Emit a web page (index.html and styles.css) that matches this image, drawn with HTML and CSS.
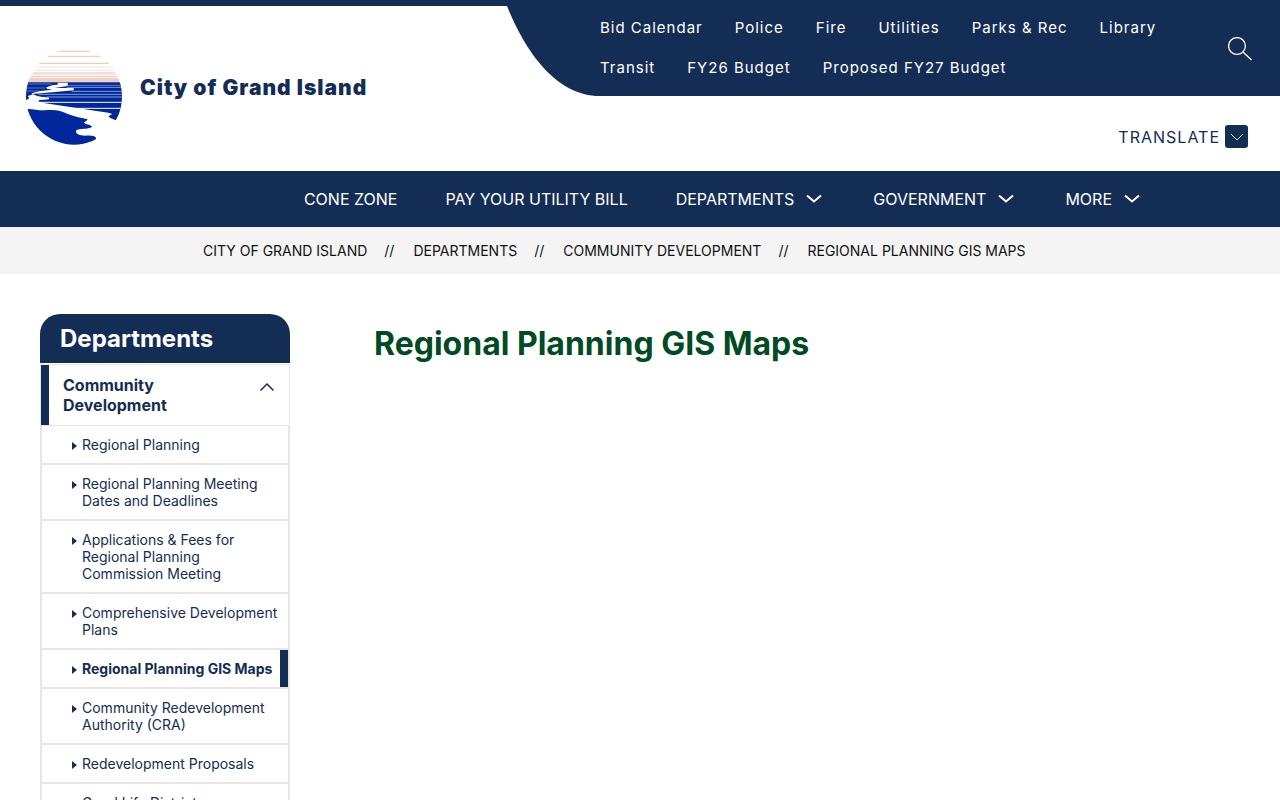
FILE: index.html
```html
<!DOCTYPE html>
<html lang="en">
<head>
<meta charset="utf-8">
<meta name="viewport" content="width=device-width, initial-scale=1">
<title>Regional Planning GIS Maps - City of Grand Island</title>
<link rel="stylesheet" href="styles.css">
</head>
<body>
<header class="site-header">
  <a class="brand" href="#">
    <svg class="brand-logo" viewBox="0 0 360 345" aria-hidden="true">
      <defs><clipPath id="disc"><circle cx="177" cy="170" r="144"/></clipPath></defs>
      <g clip-path="url(#disc)">
        <g fill="none" stroke-width="3">
          <path stroke="#eec0b2" d="M125 34H230M98 49H257M70 70H285M40 99H320M35 110H325"/>
          <path stroke="#ece6dc" d="M60 81H300M50 90H310M40 104H320"/>
          <path stroke="#f0bfb0" stroke-width="4" d="M30 117H325M30 123H325"/>
        </g>
        <path fill="#00279b" d="M30 127H325V242H306L286 234L280 229L292 222L280 218L200 206L86 189L68 184L74 179L102 178V174L69 169L54 163L30 161Z"/>
        <path fill="none" stroke="#8fa0bd" stroke-width="2" d="M30 132H110M158 136H325M30 144H90M30 153H75"/>
        <path fill="none" stroke="#c9d6ef" stroke-width="2" d="M155 142H325M170 154H325M70 163H325M95 171H325"/>
        <path fill="none" stroke="#fff" stroke-width="3" d="M75 187H325M160 205H325"/>
        <path fill="#fff" d="M96 146L94 142L114 135L128 134V128H158V138L118 144H176V151L120 156L58 161L52 166L70 170L102 173V177L74 179L68 184L86 189V207H30V187L43 174L38 168L50 160L76 153L112 149Z"/>
        <path fill="#00279b" d="M30 161L50 160L54 163L38 168L43 174L34 181H30ZM30 207C60 207 70 212 88 211C120 208 136 210 158 222C180 231 200 233 218 238C214 246 206 245 208 249C216 255 230 254 231 261C220 269 192 264 183 272C181 282 194 287 210 287C225 286 244 287 243 296C238 306 225 308 205 325H100L30 260Z"/>
      </g>
    </svg>
    <span class="brand-name">City of Grand Island</span>
  </a>
  <div class="header-side">
    <div class="quick">
      <svg class="quick-curve" viewBox="0 0 94 96" aria-hidden="true"><path d="M0 0L1 6C18 48 48 96 94 96V0Z"/></svg>
      <nav class="quick-links" aria-label="Quick links">
        <a href="#">Bid Calendar</a><a href="#">Police</a><a href="#">Fire</a><a href="#">Utilities</a><a href="#">Parks &amp; Rec</a><a href="#">Library</a><a href="#">Transit</a><a href="#">FY26 Budget</a><a href="#">Proposed FY27 Budget</a>
      </nav>
      <button class="search" type="button" aria-label="Search">
        <svg viewBox="0 0 24 24" aria-hidden="true"><circle cx="9" cy="9" r="8.4"/><path d="M15 15L23.5 23"/></svg>
      </button>
    </div>
    <button class="translate" type="button">TRANSLATE
      <span class="translate-icon"><svg viewBox="0 0 14 8" aria-hidden="true"><path d="M1 1L7 7L13 1"/></svg></span>
    </button>
  </div>
</header>
<nav class="main-nav" aria-label="Main">
  <a href="#">CONE ZONE</a>
  <a href="#">PAY YOUR UTILITY BILL</a>
  <button type="button">DEPARTMENTS <svg viewBox="0 0 16 10" aria-hidden="true"><path d="M1 1.500L8 7.500L15 1.500"/></svg></button>
  <button type="button">GOVERNMENT <svg viewBox="0 0 16 10" aria-hidden="true"><path d="M1 1.500L8 7.500L15 1.500"/></svg></button>
  <button type="button">MORE <svg viewBox="0 0 16 10" aria-hidden="true"><path d="M1 1.500L8 7.500L15 1.500"/></svg></button>
</nav>
<nav class="breadcrumb" aria-label="Breadcrumb">
  <a href="#">CITY OF GRAND ISLAND</a><span>//</span><a href="#">DEPARTMENTS</a><span>//</span><a href="#">COMMUNITY DEVELOPMENT</a><span>//</span><a href="#">REGIONAL PLANNING GIS MAPS</a>
</nav>
<div class="page">
  <aside class="sidebar">
    <h2>Departments</h2>
    <button class="section" type="button" aria-expanded="true"><span>Community Development</span>
      <svg viewBox="0 0 16 10" aria-hidden="true"><path d="M1.500 8.500L8 2L14.500 8.500"/></svg>
    </button>
    <ul class="section-links">
      <li><a href="#">Regional Planning</a></li>
      <li><a href="#">Regional Planning Meeting Dates and Deadlines</a></li>
      <li><a href="#">Applications &amp; Fees for Regional Planning Commission Meeting</a></li>
      <li><a href="#">Comprehensive Development Plans</a></li>
      <li class="current"><a href="#" aria-current="page">Regional Planning GIS Maps</a></li>
      <li><a href="#">Community Redevelopment Authority (CRA)</a></li>
      <li><a href="#">Redevelopment Proposals</a></li>
      <li><a href="#">Good Life District</a></li>
    </ul>
  </aside>
  <main class="content"><h1>Regional Planning GIS Maps</h1></main>
</div>
</body>
</html>
```
FILE: styles.css
```css
:root { --navy: #142d55; --line: #e6e6e6; }
* { box-sizing: border-box; }
html { overflow: hidden; height: 100%; }
body { margin: 0; font-family: Inter, "Liberation Sans", sans-serif; font-size: 16px; color: var(--navy); background: #fff; }
a { color: inherit; text-decoration: none; }
button { font: inherit; color: inherit; background: none; border: 0; padding: 0; cursor: pointer; }
svg { display: block; flex: none; fill: none; stroke: currentColor; }

.site-header { display: flex; justify-content: space-between; min-height: 171px; border-top: 6px solid var(--navy); }
.brand { display: flex; align-items: center; align-self: flex-start; padding: 34px 0 0 15px; gap: 5px; }
.brand-logo { width: 120px; height: 115px; stroke: none; }
.brand-name { font-size: 21px; font-weight: 900; letter-spacing: 1px; padding-bottom: 20px; }

.header-side { display: flex; flex-direction: column; width: 774px; margin-top: -6px; }
.quick { display: flex; color: #fff; }
.quick-curve { width: 94px; height: 96px; fill: var(--navy); stroke: none; }
.quick-links { flex: 1; display: flex; flex-wrap: wrap; align-content: center; column-gap: 32px; background: var(--navy); font-size: 15px; letter-spacing: 1px; line-height: 40px; }
.search { width: 80px; padding-top: 2px; background: var(--navy); display: flex; align-items: center; justify-content: center; }
.search svg { width: 24px; height: 24px; stroke-width: 1.3; }
.translate { display: flex; align-items: center; gap: 5px; align-self: flex-end; margin: 29px 32px 0 0; letter-spacing: 1px; }
.translate-icon { display: grid; place-items: center; width: 23px; height: 23px; border-radius: 3px; background: var(--navy); color: #fff; }
.translate-icon svg { width: 14px; height: 8px; }

.main-nav { display: flex; flex-wrap: wrap; justify-content: flex-end; column-gap: 48px; min-height: 56px; padding-right: 140px; background: var(--navy); color: #fff; line-height: 56px; }
.main-nav button { display: flex; align-items: center; gap: 12px; margin-right: 3px; }
.main-nav button:last-child { margin-right: 0; }
.main-nav svg { width: 16px; height: 10px; stroke-width: 2; }

.breadcrumb { display: flex; flex-wrap: wrap; padding: 0 203px; background: #f4f4f4; color: #111; font-size: 14px; line-height: 47px; }
.breadcrumb a { white-space: nowrap; }
.breadcrumb span { padding: 0 19px 0 17px; }

.page { display: flex; gap: 84px; padding: 40px; }
.sidebar { width: 250px; flex: none; }
.sidebar h2 { margin: 0 0 1px; padding: 10px 20px; border-radius: 20px 20px 0 0; background: var(--navy); color: #fff; font-size: 24px; line-height: 29px; }
.section { display: flex; justify-content: space-between; width: 100%; padding: 10px 14px 10px 22px; border: 1px solid var(--line); box-shadow: inset 8px 0 var(--navy); font-weight: 700; line-height: 20px; text-align: left; }
.section span { max-width: 140px; }
.section svg { width: 16px; height: 10px; margin-top: 7px; stroke-width: 1.5; }
.section-links { list-style: none; margin: 0; padding: 0; border: 2px solid var(--line); border-top: 0; font-size: 14px; line-height: 17px; }
.section-links li { display: flex; padding: 10px 8px 10px 30px; border-bottom: 2px solid var(--line); }
.section-links li:last-child { border-bottom: 0; }
.section-links li::before { content: ""; flex: none; align-self: flex-start; margin: 6px 5px 0 0; border: solid transparent; border-width: 4px 0 4px 5px; border-left-color: var(--navy); }
.section-links .current { font-weight: 700; box-shadow: inset -8px 0 var(--navy); }

.content { flex: 1; }
.content h1 { margin: 10px 0; font-size: 32px; line-height: 39px; color: #004b23; }
```
